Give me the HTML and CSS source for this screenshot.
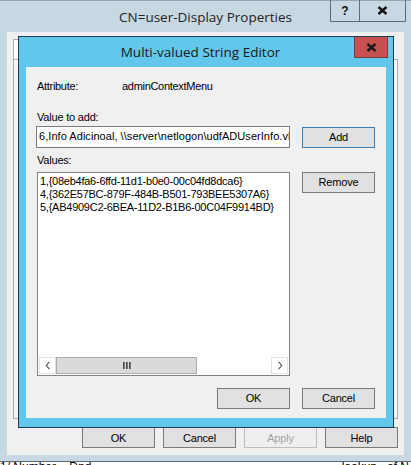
FILE: index.html
```html
<!DOCTYPE html>
<html>
<head>
<meta charset="utf-8">
<link rel="stylesheet" href="styles.css">
</head>
<body>
<div class="outer">
  <div class="outer-title">
    <div class="cap-left"></div>
    <div class="outer-caption">CN=user-Display Properties</div>
    <div class="cap-btns">
      <div class="cap-btn help">?</div>
      <div class="cap-btn close">
        <svg width="11" height="9" viewBox="0 0 11 9"><path d="M1.5 1 L9.5 8 M9.5 1 L1.5 8" stroke="#111" stroke-width="2.4" fill="none"/></svg>
      </div>
    </div>
  </div>
  <div class="outer-client">
    <div class="tabs">
      <div class="tab-strip"><div class="tab active">General</div><div class="tab">Object</div></div>
      <div class="tab-page"></div>
    </div>
    <div class="outer-btns">
      <div class="btn obtn">OK</div>
      <div class="btn obtn">Cancel</div>
      <div class="btn obtn disabled">Apply</div>
      <div class="btn obtn">Help</div>
    </div>
  </div>
</div>
<div class="under">
  <span>1/ Number &nbsp;&nbsp; Dnd</span>
  <span>lookup &nbsp; of N</span>
</div>

<div class="dlg">
  <div class="dlg-title">
    <div></div>
    <div class="dlg-caption">Multi-valued String Editor</div>
    <div class="dlg-close">
      <svg width="11" height="9" viewBox="0 0 11 9"><path d="M1.5 1 L9.5 8 M9.5 1 L1.5 8" stroke="#1a1a1a" stroke-width="2.4" fill="none"/></svg>
    </div>
  </div>
  <div class="dlg-client">
    <div class="attr-row"><span class="attr-lbl">Attribute:</span><span>adminContextMenu</span></div>
    <div class="lbl lbl-value">Value to add:</div>
    <div class="add-row">
      <div class="input">6,Info Adicinoal, \\server\netlogon\udfADUserInfo.vbs</div>
      <div class="btn dbtn default">Add</div>
    </div>
    <div class="lbl lbl-values">Values:</div>
    <div class="list-row">
      <div class="listbox">
        <div class="items">
          <div>1,{08eb4fa6-6ffd-11d1-b0e0-00c04fd8dca6}</div>
          <div>4,{362E57BC-879F-484B-B501-793BEE5307A6}</div>
          <div>5,{AB4909C2-6BEA-11D2-B1B6-00C04F9914BD}</div>
        </div>
        <div class="hscroll">
          <div class="sb-btn"><svg width="6" height="9" viewBox="0 0 6 9"><path d="M4.5 0.8 L1.2 4.5 L4.5 8.2" stroke="#606060" stroke-width="1.2" fill="none"/></svg></div>
          <div class="sb-thumb"><span class="grip"></span><span class="grip"></span><span class="grip"></span></div>
          <div class="sb-track"></div>
          <div class="sb-btn"><svg width="6" height="9" viewBox="0 0 6 9"><path d="M1.5 0.8 L4.8 4.5 L1.5 8.2" stroke="#606060" stroke-width="1.2" fill="none"/></svg></div>
        </div>
      </div>
      <div class="btn dbtn">Remove</div>
    </div>
    <div class="dlg-foot">
      <div class="btn dbtn">OK</div>
      <div class="btn dbtn">Cancel</div>
    </div>
  </div>
</div>
</body>
</html>
```
FILE: styles.css
```css
* { box-sizing: border-box; }
html, body { margin: 0; padding: 0; }
body {
  width: 411px;
  height: 465px;
  overflow: hidden;
  background: #ffffff;
  font-family: "Liberation Sans", Arial, sans-serif;
  font-size: 11px;
  color: #000;
  position: relative;
}

/* outer property window */
.outer {
  height: 462px;
  background: #c8d8e3;
  border-top: 1px solid #98a7b2;
  border-bottom: 1px solid #5e6a73;
  display: flex;
  flex-direction: column;
}
.outer-title {
  height: 31px;
  display: grid;
  grid-template-columns: 1fr auto 1fr;
  align-items: center;
}
.outer-caption {
  font-family: "Open Sans", "Noto Sans", sans-serif;
  font-size: 13.5px;
  color: #222;
  white-space: nowrap;
}
.cap-btns {
  justify-self: end;
  align-self: start;
  display: flex;
  margin-top: -1px;
  margin-right: 5px;
}
.cap-btn {
  height: 22px;
  border: 1px solid #5f6e79;
  border-top: none;
  display: flex;
  align-items: center;
  justify-content: center;
  font-weight: bold;
  font-size: 12px;
  color: #111;
}
.cap-btn.help { width: 29px; border-right: none; }
.cap-btn.close { width: 47px; }

.outer-client {
  height: 423px;
  margin: 0 7px;
  background: #f0f0f0;
  padding: 7px 6px 7px 6px;
  display: flex;
  flex-direction: column;
}
.tabs {
  height: 380px;
  display: flex;
  flex-direction: column;
}
.tab-strip {
  height: 20px;
  display: flex;
  align-items: flex-end;
}
.tab {
  height: 18px;
  padding: 2px 6px;
  border: 1px solid #adadad;
  border-bottom: none;
  background: #f0f0f0;
}
.tab.active { height: 20px; background: #fff; }
.tab-page {
  flex: 1;
  border: 1px solid #adadad;
  background: #f4f4f4;
}
.outer-btns {
  margin-top: 8px;
  display: flex;
  justify-content: flex-end;
  gap: 8px;
}

/* buttons */
.btn {
  height: 21px;
  background: #e1e1e1;
  border: 1px solid #7a7a7a;
  display: flex;
  align-items: center;
  justify-content: center;
  font-size: 11px;
  letter-spacing: -0.2px;
}
.obtn { width: 73px; }
.obtn.disabled {
  background: #efefef;
  border-color: #bdbdbd;
  color: #a3a3a3;
}
.dbtn { width: 73px; }
.dbtn.default { border-color: #3d7fb3; }

.under {
  height: 3px;
  overflow: hidden;
  display: flex;
  justify-content: space-between;
  padding: 0 2px 0 0;
  line-height: 13px;
  font-size: 12px;
}
.under span { margin-top: -1px; display: block; }

/* inner dialog window */
.dlg {
  position: absolute;
  left: 18px;
  top: 36px;
  width: 376px;
  height: 392px;
  border: 1px solid #1f3c4e;
  background: #63c7ec;
  display: flex;
  flex-direction: column;
}
.dlg-title {
  height: 30px;
  display: grid;
  grid-template-columns: 1fr auto 1fr;
  align-items: center;
}
.dlg-caption {
  font-family: "Open Sans", "Noto Sans", sans-serif;
  font-size: 13.5px;
  color: #1a1a1a;
  white-space: nowrap;
  padding-right: 11px;
}
.dlg-close {
  justify-self: end;
  align-self: start;
  margin-right: 5px;
  width: 34px;
  height: 21px;
  background: #c75050;
  border: 1px solid #7c3c36;
  border-top: none;
  display: flex;
  align-items: center;
  justify-content: center;
}
.dlg-client {
  height: 351px;
  margin: 0 7px;
  background: #f0f0f0;
  padding: 13px 11px 0 11px;
  display: flex;
  flex-direction: column;
  line-height: 13px;
}
.attr-row { display: flex; letter-spacing: -0.3px; }
.attr-lbl { width: 85px; }
.lbl { letter-spacing: -0.2px; }
.lbl-value { margin-top: 18px; }
.lbl-values { margin-top: 6px; }
.add-row {
  margin-top: 2px;
  display: flex;
  gap: 12px;
  align-items: flex-start;
}
.input {
  margin-left: -1px;
  width: 254px;
  height: 22px;
  background: #fff;
  border: 1px solid #7a7a7a;
  padding: 3px 0 0 2px;
  white-space: nowrap;
  overflow: hidden;
  letter-spacing: 0.05px;
}
.add-row .btn { margin-top: 1px; }
.list-row {
  margin-top: 5px;
  display: flex;
  gap: 12px;
  align-items: flex-start;
}
.listbox {
  width: 253px;
  height: 204px;
  background: #fff;
  border: 1px solid #828282;
  padding: 1px;
  display: flex;
  flex-direction: column;
}
.items {
  flex: 1;
  padding: 1px 0 0 1px;
  letter-spacing: -0.25px;
  white-space: nowrap;
}
.hscroll {
  height: 17px;
  display: flex;
}
.sb-btn {
  width: 17px;
  background: #fff;
  border: 1px solid #e2e2e2;
  display: flex;
  align-items: center;
  justify-content: center;
}
.sb-thumb {
  width: 141px;
  background: #dadada;
  border: 1px solid #ababab;
  display: flex;
  align-items: center;
  justify-content: center;
  gap: 2px;
}
.grip {
  width: 1px;
  height: 7px;
  background: #4a4a4a;
  box-shadow: 1px 0 0 #7a7a7a;
}
.sb-track { flex: 1; background: #fff; }
.dlg-foot {
  margin-top: 12px;
  display: flex;
  justify-content: flex-end;
  gap: 12px;
}
```
